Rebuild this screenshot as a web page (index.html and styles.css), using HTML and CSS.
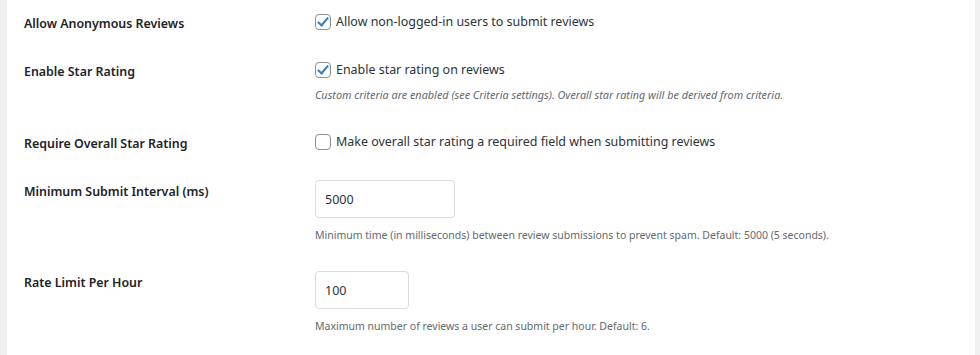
FILE: index.html
```html
<!DOCTYPE html>
<html lang="en">

<head>
  <meta charset="UTF-8">
  <title>Review Settings</title>
  <link rel="stylesheet" href="styles.css">
</head>

<body>

  <div class="wrap">
    <div class="settings-card">
      <table class="form-table">
        <tbody>
          <tr class="row-first">
            <th scope="row">Allow Anonymous Reviews</th>
            <td>
              <label class="check">
                <input type="checkbox" checked>
                <span class="box"></span>
                Allow non-logged-in users to submit reviews
              </label>
            </td>
          </tr>
          <tr>
            <th scope="row">Enable Star Rating</th>
            <td>
              <label class="check">
                <input type="checkbox" checked>
                <span class="box"></span>
                Enable star rating on reviews
              </label>
              <p class="description note">Custom criteria are enabled (see Criteria settings). Overall star rating will be derived from criteria.</p>
            </td>
          </tr>
          <tr>
            <th scope="row">Require Overall Star Rating</th>
            <td>
              <label class="check">
                <input type="checkbox">
                <span class="box"></span>
                Make overall star rating a required field when submitting reviews
              </label>
            </td>
          </tr>
          <tr class="row-input">
            <th scope="row">Minimum Submit Interval (ms)</th>
            <td>
              <input type="number" class="num wide" value="5000">
              <p class="description">Minimum time (in milliseconds) between review submissions to prevent spam. Default: 5000 (5 seconds).</p>
            </td>
          </tr>
          <tr class="row-input">
            <th scope="row">Rate Limit Per Hour</th>
            <td>
              <input type="number" class="num small" value="100">
              <p class="description">Maximum number of reviews a user can submit per hour. Default: 6.</p>
            </td>
          </tr>
        </tbody>
      </table>
    </div>
  </div>

</body>

</html>
```

FILE: styles.css
```css
body {
  margin: 0;
  padding: 0;
  background-color: #f0f0f1;
  font-family: "Noto Sans", "Open Sans", sans-serif;
  color: #1d2327;
}

.wrap {
  padding: 0 5px 0 7px;
}

.settings-card {
  background-color: #fff;
  padding: 0 17px;
  height: 355px;
  overflow: hidden;
}

.form-table {
  border-collapse: collapse;
  width: 100%;
}

.form-table th {
  width: 291px;
  padding: 17px 0 0 0;
  text-align: left;
  vertical-align: top;
  font-size: 12.4px;
  font-weight: 600;
  line-height: 18px;
}

.form-table td {
  padding: 14px 0;
  vertical-align: top;
  font-size: 12.5px;
  line-height: 20px;
}

.form-table .row-first th {
  padding-top: 15px;
}

.form-table .row-first td {
  padding-top: 12px;
}

.form-table .row-input td {
  padding-bottom: 13px;
}

.check {
  display: flex;
  align-items: center;
  gap: 4px;
  font-size: 12.45px;
  color: #2c3338;
  cursor: pointer;
}

.check input {
  position: absolute;
  opacity: 0;
}

.check .box {
  width: 14px;
  height: 14px;
  border: 1px solid #8c8f94;
  border-radius: 4px;
  background: #fff;
  margin-right: 1px;
  position: relative;
}

.check input:checked + .box:after {
  content: "";
  position: absolute;
  left: 4px;
  top: 0;
  width: 4px;
  height: 9px;
  border: solid #2f7fc4;
  border-width: 0 2.5px 2.5px 0;
  transform: rotate(40deg);
}

.description {
  margin: 8px 0 0;
  font-size: 10.5px;
  line-height: 18px;
  color: #646970;
}

.description.note {
  margin-top: 6px;
  font-style: italic;
  font-size: 10.85px;
}

.num {
  display: block;
  height: 38px;
  box-sizing: border-box;
  padding: 0 9px;
  border: 1px solid #dcdcde;
  border-radius: 4px;
  font-family: inherit;
  font-size: 12.5px;
  color: #2c3338;
  background: #fff;
  outline: none;
  -moz-appearance: textfield;
}

.num::-webkit-inner-spin-button,
.num::-webkit-outer-spin-button {
  -webkit-appearance: none;
  margin: 0;
}

.num.wide {
  width: 140px;
}

.num.small {
  width: 94px;
}
```
